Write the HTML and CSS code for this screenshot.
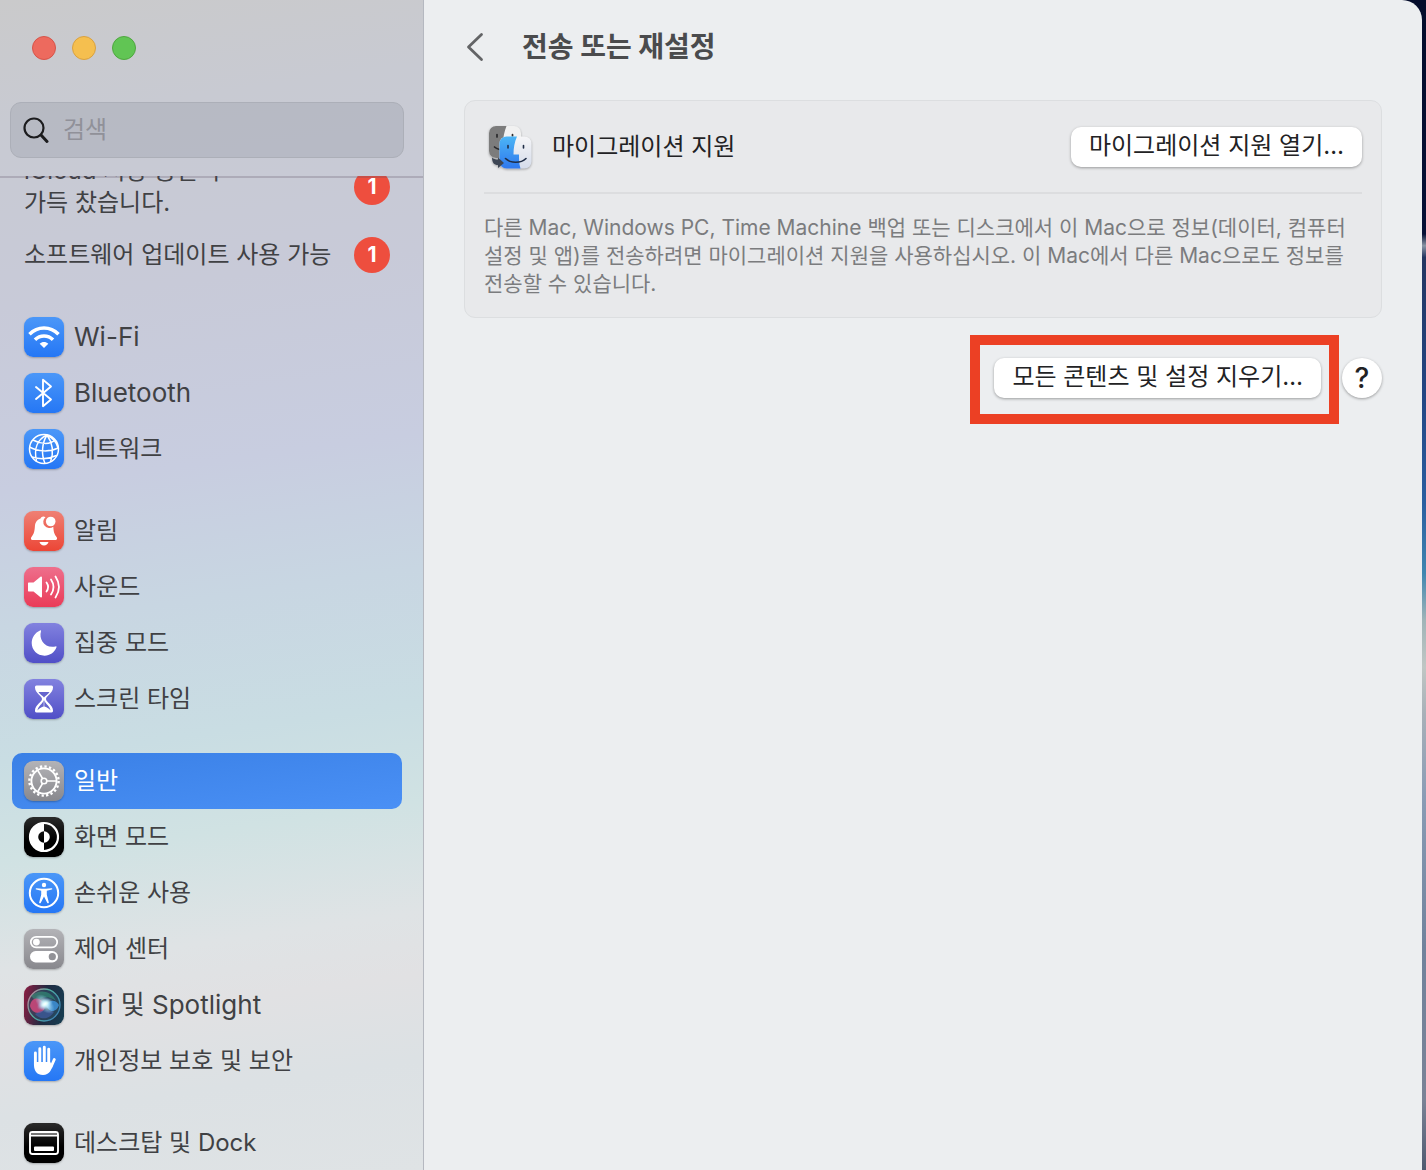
FILE: index.html
```
<!DOCTYPE html>
<html lang="ko">

  <head>
    <meta charset="utf-8">
    <title>전송 또는 재설정</title>
    <link rel="stylesheet" href="styles.css">
  </head>
  <body>

    <div class="window">
      <aside class="sidebar">
        <div class="sidebar-top">
          <div class="lights">
            <button class="light red" aria-label="닫기"></button>
            <button class="light yellow" aria-label="최소화"></button>
            <button class="light green" aria-label="확대"></button>
          </div>
          <label class="search">
            <svg width="26" height="28" viewBox="0 0 26 28" fill="none" stroke="#1c1c1e" stroke-linecap="round"><circle cx="11" cy="12" r="9.500" stroke-width="2.200"/><path d="M18 19l6 6.500" stroke-width="3"/></svg>
            <input type="text" placeholder="검색" aria-label="검색">
          </label>
        </div>

        <nav class="list">
          <ul class="notices">
            <li><a class="notice" href="#"><span>iCloud 저장 공간이<br>가득 찼습니다.</span><b class="badge">1</b></a></li>
            <li><a class="notice" href="#"><span>소프트웨어 업데이트 사용 가능</span><b class="badge">1</b></a></li>
          </ul>

          <ul>
            <li><a class="item latin" href="#">
              <svg class="icon blue" viewBox="0 0 40 40" fill="none" stroke="#fff" stroke-width="3.6"><path d="M5.500 17.200C13.700 9 26.300 9 34.500 17.200M11 22.700c5.100-5 12.900-5 18 0"/><path d="M20 31l-4.300-4.300c2.400-2.200 6.200-2.200 8.600 0z" fill="#fff" stroke="none"/></svg>
              Wi-Fi</a></li>
            <li><a class="item latin" href="#">
              <svg class="icon blue" viewBox="0 0 40 40" fill="none" stroke="#fff" stroke-width="1.9" stroke-linejoin="round" stroke-linecap="round"><path d="M12 14l15 12.500-8 6.700V6.800l8 6.700L12 26"/></svg>
              Bluetooth</a></li>
            <li><a class="item" href="#">
              <svg class="icon blue" viewBox="0 0 40 40" fill="none" stroke="#fff" stroke-width="1.5"><circle cx="20" cy="20" r="14.500"/><path d="M23 6C14 10 9.500 19 12.500 32M23 6C18 14 17 25 21 34.500M23 6c5 7 7 17 3.500 27M23 6c6 3 10 8 11 13M9 11c7 4 17 5 22 0M5.500 18c8 4.500 20 5.500 28.800 1M8 28c8 2.500 17 2 24.500-1.500"/></svg>
              네트워크</a></li>
          </ul>

          <ul>
            <li><a class="item" href="#">
              <svg class="icon orange" viewBox="0 0 40 40" fill="#fff"><path d="M21.500 6.200a5.900 5.900 0 0 0 7.800 9.500c.3 5 .9 7.300 3.400 10.500.7.900.3 2.800-1 2.800H8.300c-1.300 0-1.700-1.900-1-2.800 2.700-3.400 3.200-5.500 3.600-11 .3-4.200 2.800-6.800 5.600-7.700.8-2.200 3.200-2.700 5-1.300z"/><circle cx="26.700" cy="10.500" r="4.800"/><path d="M15.500 31h9c-.7 2.200-2.300 3.400-4.500 3.400s-3.800-1.200-4.500-3.400z"/></svg>
              알림</a></li>
            <li><a class="item" href="#">
              <svg class="icon pink" viewBox="0 0 40 40" fill="none" stroke="#fff" stroke-width="1.8" stroke-linecap="round"><path d="M5 15.500h4.500l7-5.800c.7-.5 1.500-.2 1.500.7v19.200c0 .9-.8 1.300-1.500.7l-7-5.800H5c-.8 0-1-.5-1-1v-7c0-.6.3-1 1-1z" fill="#fff" stroke="none"/><path d="M22.500 15.500c2 2.800 2 6.200 0 9M27 12.500c3.200 4.800 3.200 10.200 0 15M31.500 9.500c4.500 6.800 4.500 14.200 0 21"/></svg>
              사운드</a></li>
            <li><a class="item" href="#">
              <svg class="icon purple" viewBox="0 0 40 40" fill="#fff"><path d="M17 8.200c-2.500 8 3.800 17.500 14.500 15.200.9-.2 1.200.4.9 1.200C30.500 29.500 26 32.700 20.500 32.700 13.200 32.700 7.700 27.200 7.700 20.100c0-5.700 3.400-10.700 8.300-12.700.8-.3 1.200.1 1 .8z"/></svg>
              집중 모드</a></li>
            <li><a class="item" href="#">
              <svg class="icon purple" viewBox="0 0 40 40" fill="none"><path d="M12.500 6.500h15c1.300 0 1.500 1 1.500 2 0 5.500-7 8.500-7 11.500s7 6 7 11.500c0 1-.2 2-1.500 2h-15c-1.300 0-1.500-1-1.500-2 0-5.500 7-8.500 7-11.500s-7-6-7-11.500c0-1 .2-2 1.500-2z" fill="#fff"/><path d="M14.500 13h11c-1 2-4.500 4-5.500 5.500-1-1.500-4.500-3.500-5.500-5.500zM19.700 21v6.500c-2.200.5-4.700 2-6.200 4 .5-4.500 5.200-6.500 6.200-10.500zM20.300 21v6.500c2.200.5 4.700 2 6.200 4-.5-4.500-5.200-6.500-6.200-10.500z" fill="#6565ce"/></svg>
              스크린 타임</a></li>
          </ul>

          <ul>
            <li><a class="item selected" href="#" aria-current="page">
              <svg class="icon gray" viewBox="0 0 40 40" fill="none" stroke="#fff"><circle cx="20" cy="20" r="14.600" stroke-width="2.400" stroke-dasharray="2.300 2.287"/><circle cx="20" cy="20" r="12.600" stroke-width="1.900"/><circle cx="20" cy="20" r="2.800" stroke-width="1.600"/><path d="M22.800 20h9.500M18.600 17.600l-5-8.500M18.600 22.400l-5 8.500" stroke-width="1.700"/></svg>
              일반</a></li>
            <li><a class="item" href="#">
              <svg class="icon black" viewBox="0 0 40 40"><circle cx="20" cy="20" r="14" fill="none" stroke="#fff" stroke-width="2.200"/><path d="M20 5.500a14.500 14.500 0 0 0 0 29v-8.700a5.800 5.800 0 0 1 0-11.600zM20 14.200a5.800 5.800 0 0 1 0 11.600z" fill="#fff"/></svg>
              화면 모드</a></li>
            <li><a class="item" href="#">
              <svg class="icon blue" viewBox="0 0 40 40"><circle cx="20" cy="20" r="14.200" fill="none" stroke="#fff" stroke-width="2"/><circle cx="20" cy="12" r="2.200" fill="#fff"/><path d="M12.500 15.200l5.500.6h4l5.500-.6c1-.1 1.200 1.200.2 1.400l-4.900 1.200v4l2 7.500c.3 1.100-1.100 1.500-1.600.5L20 23.500l-3.200 6.300c-.5 1-1.900.6-1.600-.5l2-7.500v-4l-4.900-1.200c-1-.2-.8-1.500.2-1.400z" fill="#fff"/></svg>
              손쉬운 사용</a></li>
            <li><a class="item" href="#">
              <svg class="icon gray" viewBox="0 0 40 40"><rect x="6.800" y="7.800" width="26.400" height="10.600" rx="5.300" fill="none" stroke="#fff" stroke-width="1.800"/><circle cx="12.400" cy="13.100" r="3.400" fill="#fff"/><rect x="6" y="22" width="28" height="11.500" rx="5.700" fill="#fff"/><circle cx="28.300" cy="27.700" r="3.600" fill="#929297"/></svg>
              제어 센터</a></li>
            <li><a class="item latin" href="#">
              <svg class="icon siri" viewBox="0 0 40 40">
                <defs>
                  <radialGradient id="glow"><stop offset="0" stop-color="#fff"/><stop offset=".3" stop-color="#dff" stop-opacity=".8"/><stop offset="1" stop-color="#8cf" stop-opacity="0"/></radialGradient>
                  <linearGradient id="ring" x2="1" y2=".6"><stop offset="0" stop-color="#d27e9b"/><stop offset=".5" stop-color="#4fae9e"/><stop offset="1" stop-color="#3f87b5"/></linearGradient>
                </defs>
                <circle cx="20" cy="20" r="16" fill="#31536b" fill-opacity=".55" stroke="url(#ring)" stroke-width="1.300"/>
                <path d="M7 11C14 4 27 5 32 16c-7-5-14-5-19 1z" fill="#33a57f" opacity=".5"/>
                <path d="M6 21c1-8 8-10 13-4 4 5 1 11-5 11-4 0-7-3-8-7z" fill="#d9487e" opacity=".8"/>
                <path d="M22 20c4-6 10-5 13 0-2 7-10 9-13 0z" fill="#3e92d8" opacity=".85"/>
                <path d="M11 29c6-4 12-5 19-2-5 8-14 8-19 2z" fill="#4461ae" opacity=".6"/>
                <ellipse cx="21" cy="19" rx="12" ry="7" fill="url(#glow)" transform="rotate(45 21 19)"/>
                <ellipse cx="21" cy="19" rx="9" ry="5" fill="url(#glow)" transform="rotate(-30 21 19)"/>
              </svg>
              Siri 및 Spotlight</a></li>
            <li><a class="item" href="#">
              <svg class="icon blue" viewBox="0 0 40 40" fill="none" stroke="#fff" stroke-linecap="round" stroke-linejoin="round"><path d="M11.400 12v12M15.800 7.800V22M20.300 6.300V22M24.700 8.300V23M30.300 18.500L27 26" stroke-width="2.900"/><path d="M10 21h16.200l1.600 3 1.500-1.500C27.500 29 25.500 34 19 34c-6 0-9-4-9-10z" fill="#fff" stroke="none"/></svg>
              개인정보 보호 및 보안</a></li>
          </ul>

          <ul>
            <li><a class="item" href="#">
              <svg class="icon black" viewBox="0 0 40 40"><rect x="6" y="9" width="28" height="22" rx="2.500" fill="none" stroke="#fff" stroke-width="1.900"/><path d="M6 12h28v1.400H6z" fill="#fff"/><path d="M7 10h26v2H7z" fill="#777"/><rect x="10" y="23.500" width="20" height="4.500" rx="1" fill="#fff"/></svg>
              데스크탑 및 Dock</a></li>
          </ul>
        </nav>
      </aside>

      <main class="content">
        <header class="title-bar">
          <button class="back" aria-label="뒤로">
            <svg width="20" height="32" viewBox="0 0 20 32" fill="none" stroke="#636466" stroke-width="2.800" stroke-linecap="round" stroke-linejoin="round"><path d="M17.500 3.500L4.500 16l13 12.500"/></svg>
          </button>
          <h1>전송 또는 재설정</h1>
        </header>

        <section class="card">
          <div class="card-row">
            <svg class="finder" width="48" height="48" viewBox="0 0 48 48">
              <defs>
                <linearGradient id="blueFace" x2="0" y2="1"><stop offset="0" stop-color="#4cb5f5"/><stop offset="1" stop-color="#2e78ee"/></linearGradient>
                <linearGradient id="whiteFace" x2="0" y2="1"><stop offset="0" stop-color="#f5f5f7"/><stop offset="1" stop-color="#d5dceb"/></linearGradient>
              </defs>
              <rect x="5" y="3" width="32" height="32" rx="7" fill="#f1f1f1"/>
              <path d="M12 3h10.500c-2 5-3.500 11-3.500 17v15h-7a7 7 0 0 1-7-7V10a7 7 0 0 1 7-7z" fill="#7c7c7c"/>
              <path d="M13 11.500v2.500M28.500 11.500v2M10.500 24c1.500 1.500 3 2 5 2.500" stroke="#29292b" stroke-width="1.700" stroke-linecap="round" fill="none"/>
              <rect x="15.500" y="13.500" width="32" height="32" rx="7" fill="url(#whiteFace)"/>
              <path d="M22.500 13.500h10.500C30.500 19 29.500 25 29.500 31.500h5.500c0 5 0 9 1.500 14H22.500a7 7 0 0 1-7-7v-18a7 7 0 0 1 7-7z" fill="url(#blueFace)"/>
              <path d="M24 22.500v2.500M39.500 22.500v2.500M21.500 35.500c5 5 15.500 5 20.500 0" stroke="#1f2d46" stroke-width="1.600" stroke-linecap="round" fill="none"/>
              <path d="M8 34.500c1.500 1.500 3.500 2 6 2v-2l6 5.500-6 5v-3c-4 0-6-2.500-6-7.500z" fill="#3d4654"/>
            </svg>
            <h2>마이그레이션 지원</h2>
            <button class="push">마이그레이션 지원 열기…</button>
          </div>
          <p>다른 Mac, Windows PC, Time Machine 백업 또는 디스크에서 이 Mac으로 정보(데이터, 컴퓨터 설정 및 앱)를 전송하려면 마이그레이션 지원을 사용하십시오. 이 Mac에서 다른 Mac으로도 정보를 전송할 수 있습니다.</p>
        </section>

        <div class="actions">
          <div class="highlight">
            <button class="push">모든 콘텐츠 및 설정 지우기…</button>
          </div>
          <button class="help" aria-label="도움말">?</button>
        </div>
      </main>
    </div>

  </body>

</html>
```

FILE: styles.css
```
* {
  box-sizing: border-box;
}

body {
  margin: 0;
  height: 100vh;
  padding-right: 4px;
  overflow: hidden;
  font-family: Inter, "Noto Sans CJK KR", sans-serif;
  font-size: 24px;
  line-height: 32px;
  color: #404144;
  background: linear-gradient(#040c2b 0%, #071036 20%, #8a95a5 21%, #243561 22%, #234684 34%, #2b5ea0 43%, #4086b0 49%, #a0b4b8 53%, #c0c6c4 57%, #a8b0b8 61%, #8a9cb5 68%, #70829c 81%, #7a8296 94%, #505a70 100%);
}

button {
  font: inherit;
  color: #222224;
  border: none;
  padding: 0;
}

h1, h2, p, ul {
  margin: 0;
  padding: 0;
}

ul {
  list-style: none;
}

.window {
  display: flex;
  height: 100%;
  overflow: hidden;
  background-color: #eceef0;
  border-radius: 0 20px 0 0;
}

/* sidebar */

.sidebar {
  display: flex;
  flex-direction: column;
  flex: none;
  width: 424px;
  border-right: 1px solid #b5b8c0;
  background: linear-gradient(172deg, #cacacb 0%, #c8cad2 10%, #c8cad8 25%, #c8cde0 40%, #c8d6e2 51%, #c9dde3 62%, #d0e2e3 70%, #dfe3e5 79%, #e1e1e3 84%, #dce1e4 91%, #dfe3e5 100%);
}

.sidebar-top {
  position: relative;
  z-index: 1;
  height: 176px;
  flex: none;
  padding: 36px 19px 0 10px;
  box-shadow: 0 2px 0 rgba(90, 80, 100, 0.25);
}

.lights {
  display: flex;
  gap: 16px;
  padding-left: 22px;
  margin-bottom: 42px;
}

.light {
  width: 24px;
  height: 24px;
  border-radius: 50%;
}

.red {
  background-color: #ed6a5e;
  border: 1px solid #d65449;
}

.yellow {
  background-color: #f5bf4f;
  border: 1px solid #d9a140;
}

.green {
  background-color: #61c554;
  border: 1px solid #4fa73f;
}

.search {
  display: flex;
  align-items: center;
  gap: 14px;
  height: 56px;
  padding: 0 12px;
  border: 1px solid #acafb8;
  border-radius: 11px;
  background-color: rgba(100, 107, 118, 0.16);
}

.search svg {
  flex: none;
}

.search input {
  flex: 1;
  min-width: 0;
  padding: 0;
  border: none;
  outline: none;
  background: none;
  font: inherit;
}

.search input::placeholder {
  color: #909199;
  opacity: 1;
}

/* the list is scrolled a little under the search box */
.list {
  flex: 1;
  min-height: 0;
  overflow: hidden;
  padding: 0 21px 0 12px;
}

.notices {
  margin-top: -29px;
}

.list ul + ul {
  margin-top: 26px;
}

.list a {
  color: inherit;
  text-decoration: none;
}

.notice {
  display: flex;
  align-items: center;
  justify-content: space-between;
  min-height: 56px;
  padding: 8px 12px;
  white-space: nowrap;
}

.badge {
  flex: none;
  width: 36px;
  height: 36px;
  border-radius: 50%;
  background-color: #ee4e3e;
  color: #ffffff;
  font-size: 21px;
  line-height: 36px;
  text-align: center;
}

.item {
  display: flex;
  align-items: center;
  gap: 10px;
  height: 56px;
  padding: 0 12px;
  border-radius: 10px;
}

.latin {
  font-size: 26px;
}

.list .selected {
  color: #ffffff;
  background: linear-gradient(172deg, #3a80e6, #4a90f5);
}

.icon {
  flex: none;
  width: 40px;
  height: 40px;
  border-radius: 9px;
  box-shadow: 0 1px 2px rgba(0, 0, 0, 0.25);
}

.blue {
  background: linear-gradient(#4b97f8, #2577f5);
}

.orange {
  background: linear-gradient(#ef8074, #ec4636);
}

.pink {
  background: linear-gradient(#ee6f8c, #ea3b58);
}

.purple {
  background: linear-gradient(#8282df, #504fc7);
}

.gray {
  background: linear-gradient(#b3b3b7, #88888d);
}

.black {
  background: linear-gradient(#2b2b2b, #000000 60%);
}

.siri {
  background: linear-gradient(100deg, #8e1d42, #202a42 50%, #163e52);
}

/* content */

.content {
  flex: 1;
  min-width: 0;
  padding: 0 40px;
}

.title-bar {
  display: flex;
  align-items: center;
  gap: 38px;
  height: 100px;
  padding-bottom: 6px;
}

.back {
  display: flex;
  background: none;
}

h1 {
  font-size: 28px;
  font-weight: bold;
  color: #4a4b4d;
}

.card {
  border: 1px solid #dcdee0;
  border-radius: 11px;
  padding: 0 19px 19px;
  background-color: #e8e9eb;
}

.card-row {
  display: flex;
  align-items: center;
  gap: 20px;
  height: 93px;
  border-bottom: 2px solid #dcdddf;
}

.finder {
  filter: drop-shadow(0 1px 1px rgba(0, 0, 0, 0.3));
}

h2 {
  flex: 1;
  font-size: 24px;
  font-weight: normal;
  color: #222224;
}

.push {
  height: 40px;
  padding: 0 18px 2px;
  border-radius: 10px;
  background-color: #ffffff;
  box-shadow: 0 1px 3px rgba(0, 0, 0, 0.35);
  white-space: nowrap;
}

.card p {
  padding-top: 20px;
  font-size: 21px;
  line-height: 28px;
  color: #7b7c7e;
}

.actions {
  display: flex;
  justify-content: flex-end;
  gap: 3px;
  margin-top: 17px;
}

.highlight {
  border: 10px solid #ec4024;
  padding: 13px 8px 16px 14px;
}

.highlight .push {
  display: block;
}

.help {
  width: 40px;
  height: 40px;
  margin-top: 23px;
  border-radius: 50%;
  background-color: #ffffff;
  box-shadow: 0 1px 3px rgba(0, 0, 0, 0.35);
  font-size: 28px;
  font-weight: 500;
  line-height: 40px;
}
```
